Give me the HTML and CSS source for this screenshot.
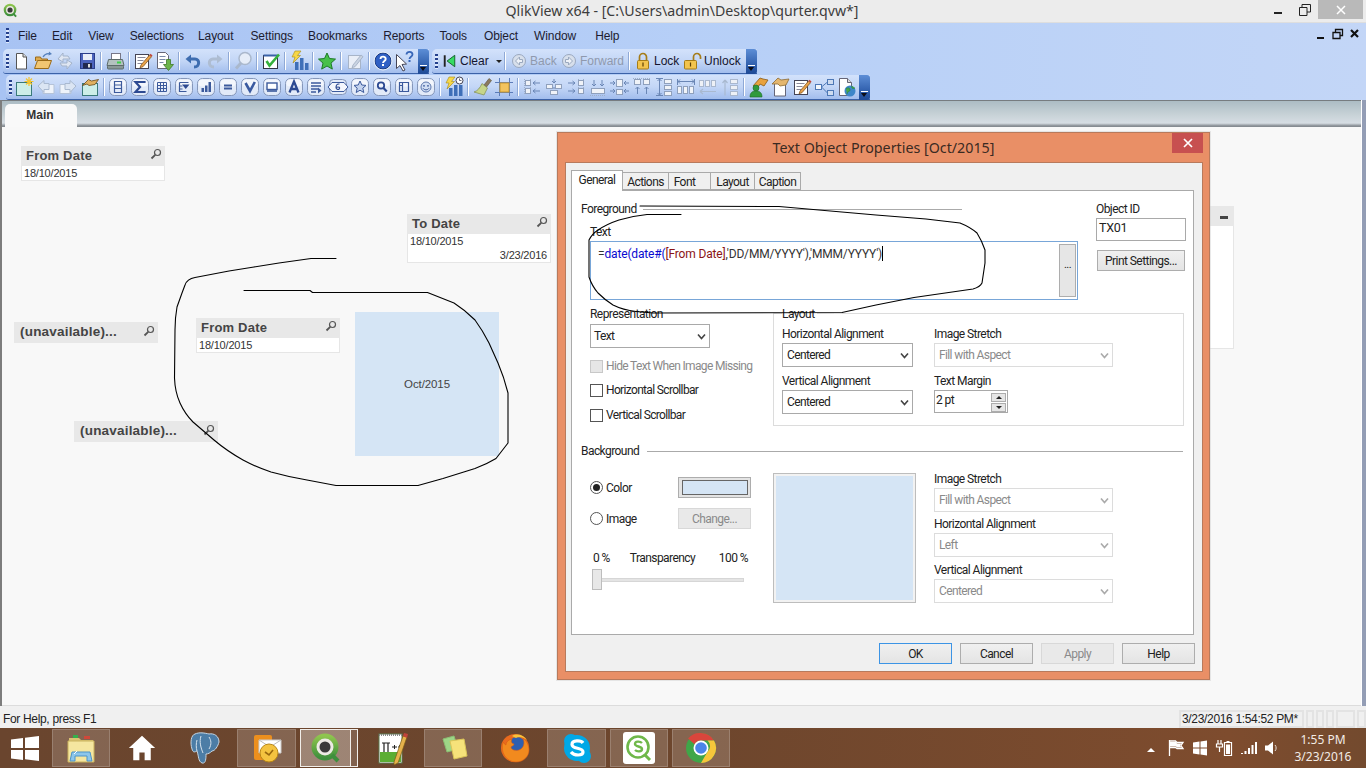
FILE: index.html
```html
<!DOCTYPE html>
<html lang="en">
<head>
<meta charset="utf-8">
<title>QlikView x64 - [C:\Users\admin\Desktop\qurter.qvw*]</title>
<link rel="stylesheet" href="styles.css">
</head>
<body>
<svg class="sprite" xmlns="http://www.w3.org/2000/svg">
<defs>
<g id="fr"><rect x="2.500" y="2.500" width="17" height="17" rx="5" fill="#e2eaf8" stroke="#8597ba"/><rect x="3.500" y="3.500" width="15" height="7" rx="3.500" fill="#f3f6fc"/></g>
<linearGradient id="qring" x1="0" y1="0" x2="0" y2="1"><stop offset="0" stop-color="#8fc54e"/><stop offset="1" stop-color="#3d8f3c"/></linearGradient>
</defs>
<symbol id="doc" viewBox="0 0 22 22"><path d="M6.500 3.500h6.500l3.500 3.500v12h-10z" fill="#fff" stroke="#555"/><path d="M13 3.500v3.500h3.500" fill="#ddd" stroke="#555"/></symbol>
<symbol id="open" viewBox="0 0 22 22"><path d="M3.500 11V7h5l1 2h6v2" fill="#dca94f" stroke="#9a6a18"/><path d="M2.500 18.500l3-8h14l-3 8z" fill="#f2c672" stroke="#9a6a18"/><path d="M11 7c2-3 4-4 7-3" fill="none" stroke="#5580bc" stroke-width="1.300"/><path d="M17 1.500l3 2.500-3.500 1.500z" fill="#5580bc"/></symbol>
<symbol id="sync" viewBox="0 0 22 22"><path d="M4 9l5-6v3h5l2 3H9v3zM18 13l-5 6v-3H8l-2-3h7v-3z" fill="#dfe6f2" stroke="#a3b3ca"/></symbol>
<symbol id="save" viewBox="0 0 22 22"><rect x="4.500" y="3.500" width="14" height="15" fill="#4c63bd" stroke="#2b3d8a"/><rect x="7" y="4" width="9" height="6" fill="#e8edf8"/><rect x="7" y="13" width="9" height="5.500" fill="#20284f"/><rect x="12" y="14" width="2" height="3.500" fill="#ddd"/></symbol>
<symbol id="print" viewBox="0 0 22 22"><rect x="7.500" y="3.500" width="9" height="6" fill="#fff" stroke="#778"/><path d="M4.500 9.500h14l1.500 6h-17z" fill="#b4c2c0" stroke="#5d6b6a"/><rect x="3.500" y="15.500" width="16" height="3.500" rx="1" fill="#8a9897" stroke="#5d6b6a"/><rect x="13" y="11.500" width="4" height="2" fill="#3fd14a"/></symbol>
<symbol id="edit" viewBox="0 0 22 22"><rect x="3.500" y="4.500" width="13" height="14" fill="#fff" stroke="#445"/><path d="M5.500 7.500h8M5.500 10.500h6M5.500 13.500h5" stroke="#889"/><path d="M9 15l8.500-10 2 1.700-8.500 10-3 1z" fill="#e8a24a" stroke="#7a4a18" stroke-width=".7"/><path d="M17.500 5l1-1.200 2 1.700-1 1.200z" fill="#c0443a"/></symbol>
<symbol id="import" viewBox="0 0 22 22"><path d="M3.500 2.500h8l3 3v13h-11z" fill="#fff" stroke="#667"/><path d="M5.500 6.500h6M5.500 9.500h6M5.500 12.500h4" stroke="#7a8aa8"/><path d="M12.500 9.500h4v5h3l-5 6-5-6h3z" fill="#6cb44a" stroke="#3f7a28" stroke-width=".8"/></symbol>
<symbol id="undo" viewBox="0 0 22 22"><path d="M8 9h5c5 0 5 8-1 8" fill="none" stroke="#3e6db0" stroke-width="3"/><path d="M3.500 9L9 4.500v9z" fill="#3e6db0"/></symbol>
<symbol id="redo" viewBox="0 0 22 22"><path d="M14 9H9c-5 0-5 8 1 8" fill="none" stroke="#aebdd2" stroke-width="3"/><path d="M18.500 9L13 4.500v9z" fill="#aebdd2"/></symbol>
<symbol id="find" viewBox="0 0 22 22"><circle cx="13" cy="8.500" r="6" fill="#e6edf8" stroke="#aab8cc" stroke-width="1.500"/><path d="M9 13l-5 5.500" stroke="#aab8cc" stroke-width="3"/></symbol>
<symbol id="check" viewBox="0 0 22 22"><rect x="3.500" y="5.500" width="14" height="13" fill="#fff" stroke="#334"/><path d="M3.500 5.500h14" stroke="#3a62a8" stroke-width="2"/><path d="M6.500 11l3 4.500 9.500-11" fill="none" stroke="#35b03c" stroke-width="2.600"/></symbol>
<symbol id="chart" viewBox="0 0 22 22"><path d="M7 1h6l-3.500 4.500h3L5 13l2-6H4z" fill="#f7d748" stroke="#a58a16" stroke-width=".6"/><rect x="7" y="12" width="3.500" height="8" fill="#3f6fb8"/><rect x="12" y="8" width="3.500" height="12" fill="#3f6fb8"/><rect x="17" y="13" width="3.500" height="7" fill="#3f6fb8"/></symbol>
<symbol id="chartc" viewBox="0 0 22 22"><path d="M6 1h6l-3.500 4.500h3L4 13l2-6H3z" fill="#f7d748" stroke="#a58a16" stroke-width=".6"/><rect x="6" y="12" width="3.500" height="8" fill="#3f6fb8"/><rect x="11" y="9" width="3.500" height="11" fill="#3f6fb8"/><rect x="16" y="9" width="3.500" height="11" fill="#3f6fb8"/><circle cx="16.500" cy="4.500" r="3.500" fill="#fff" stroke="#445"/><path d="M16.500 2.500v2h2" fill="none" stroke="#445" stroke-width=".8"/></symbol>
<symbol id="star" viewBox="0 0 22 22"><path d="M11 3l2.500 5.500 6 .6-4.500 4 1.300 6L11 16l-5.300 3.100 1.300-6-4.500-4 6-.6z" fill="#47c04a" stroke="#1d7a26"/></symbol>
<symbol id="editg" viewBox="0 0 22 22"><rect x="4.500" y="5.500" width="12" height="13" fill="#e9eef7" stroke="#a7b4c8"/><path d="M9 15l8-10 2 1.700-8 10-3 1z" fill="#c9d3e2" stroke="#9eacc2" stroke-width=".8"/></symbol>
<symbol id="help" viewBox="0 0 22 22"><circle cx="11" cy="11" r="8" fill="#2f5fc4" stroke="#1d3b80"/><circle cx="11" cy="11" r="9" fill="none" stroke="#e5ecf8"/><path d="M8.500 9c0-3.200 5.200-3.200 5.200-.1 0 2-2.700 2-2.700 4.100" fill="none" stroke="#fff" stroke-width="1.900"/><rect x="10" y="14" width="2" height="2" fill="#fff"/></symbol>
<symbol id="what" viewBox="0 0 22 22"><path d="M2.500 4.500l0 14 3.500-3 3 5.500 2-1-3-5.500 4.500-.5z" fill="#fff" stroke="#445"/><path d="M12.500 4.500c0-3.500 6-3.500 6 0 0 2.300-3 2.200-3 4.500" fill="none" stroke="#3766b8" stroke-width="1.800"/><rect x="14.500" y="10" width="2" height="2" fill="#3766b8"/></symbol>
<symbol id="clear" viewBox="0 0 22 22"><path d="M6 5v12" stroke="#222" stroke-width="2"/><path d="M16.500 5L8.500 11l8 6z" fill="#35dc62" stroke="#155f2a"/></symbol>
<symbol id="cback" viewBox="0 0 22 22"><circle cx="11" cy="11" r="6.500" fill="#d7dfeb" stroke="#9aa8bf"/><path d="M14.500 9.500h-3V7l-4 4 4 4v-2.500h3z" fill="#eef2f8" stroke="#9aa8bf"/></symbol>
<symbol id="cfwd" viewBox="0 0 22 22"><circle cx="11" cy="11" r="6.500" fill="#d7dfeb" stroke="#9aa8bf"/><path d="M7.500 9.500h3V7l4 4-4 4v-2.500h-3z" fill="#eef2f8" stroke="#9aa8bf"/></symbol>
<symbol id="lock" viewBox="0 0 22 22"><path d="M7.500 11V7a3.500 3.500 0 0 1 7 0v4" fill="none" stroke="#a57c18" stroke-width="1.700"/><rect x="5.500" y="10.500" width="11" height="8.500" rx="1" fill="#f2c44e" stroke="#a57c18"/><path d="M11 12.500v4" stroke="#5a3f06" stroke-width="1.200"/></symbol>
<symbol id="unlock" viewBox="0 0 22 22"><path d="M11.500 11V7a3.500 3.500 0 0 1 7 0v2" fill="none" stroke="#a57c18" stroke-width="1.700"/><rect x="2.500" y="10.500" width="12" height="8.500" rx="1" fill="#f2c44e" stroke="#a57c18"/><path d="M8.500 12.500v4" stroke="#5a3f06" stroke-width="1.200"/></symbol>
<symbol id="snew" viewBox="0 0 22 22"><rect x="3.500" y="6.500" width="15" height="13" fill="#cdeee8" stroke="#3a7a7a"/><path d="M16 1v9M11.500 5.500h9M13 2.500l6 6M19 2.500l-6 6" stroke="#f4c430" stroke-width="1.200"/></symbol>
<symbol id="sback" viewBox="0 0 22 22"><path d="M8 8.500h11v9h-11z" fill="#eef3fa" stroke="#b5c3d8"/><path d="M3 10l6-5.500v3h5v6H9v3z" fill="#dbe5f3" stroke="#a9b9d0"/></symbol>
<symbol id="sfwd" viewBox="0 0 22 22"><path d="M3 8.500h11v9H3z" fill="#eef3fa" stroke="#b5c3d8"/><path d="M19 10l-6-5.500v3H8v6h5v3z" fill="#dbe5f3" stroke="#a9b9d0"/></symbol>
<symbol id="sprop" viewBox="0 0 22 22"><rect x="3.500" y="7.500" width="15" height="12" fill="#cdeee8" stroke="#3a7a7a"/><path d="M3.500 9.500l6-6 3 1.500 7-1.500-3.500 5-6 1-2-1.500z" fill="#e0b060" stroke="#6a4a18" stroke-width=".8"/></symbol>
<symbol id="r-list" viewBox="0 0 22 22"><use href="#fr"/><path d="M7.500 5.500h7v11h-7zM7.500 9h7M7.500 12.500h7" fill="none" stroke="#3c5a9c" stroke-width="1.200"/></symbol>
<symbol id="r-sum" viewBox="0 0 22 22"><use href="#fr"/><path d="M15.500 7V6h-9l4.500 5-4.500 5h9v-1" fill="none" stroke="#2d4a92" stroke-width="2.200"/></symbol>
<symbol id="r-grid" viewBox="0 0 22 22"><use href="#fr"/><path d="M6.500 6.500h9v9h-9zM9.500 6.500v9M12.500 6.500v9M6.500 9.500h9M6.500 12.500h9" fill="none" stroke="#3c5a9c"/></symbol>
<symbol id="r-drop" viewBox="0 0 22 22"><use href="#fr"/><path d="M6.500 6.500h9M6.500 6.500v9h7M6.500 10h3M6.500 13h3" fill="none" stroke="#3c5a9c" stroke-width="1.200"/><path d="M9 8.500h7.500L12.700 13z" fill="#2d4a92"/></symbol>
<symbol id="r-bars" viewBox="0 0 22 22"><use href="#fr"/><rect x="6.500" y="12" width="2.500" height="4" fill="#3c5a9c"/><rect x="10" y="9.500" width="2.500" height="6.500" fill="#3c5a9c"/><rect x="13.500" y="6" width="2.500" height="10" fill="#3c5a9c"/></symbol>
<symbol id="r-eq" viewBox="0 0 22 22"><use href="#fr"/><path d="M7 9.500h8M7 12.500h8" stroke="#3c5a9c" stroke-width="1.800"/></symbol>
<symbol id="r-v" viewBox="0 0 22 22"><use href="#fr"/><path d="M6.500 7l4.500 8 4.800-9" fill="none" stroke="#3a5aa0" stroke-width="2.600"/></symbol>
<symbol id="r-win" viewBox="0 0 22 22"><use href="#fr"/><rect x="6" y="7" width="10" height="6.500" fill="#fff" stroke="#3c5a9c" stroke-width="1.400"/><path d="M6 15h10" stroke="#3c5a9c" stroke-width="1.600"/></symbol>
<symbol id="r-a" viewBox="0 0 22 22"><use href="#fr"/><path d="M6.500 16.500L11 5.500l4.500 11M8 13h6" fill="none" stroke="#2d4a92" stroke-width="2.300"/></symbol>
<symbol id="r-lines" viewBox="0 0 22 22"><use href="#fr"/><path d="M6 7h10M6 10h10M6 13h7M6 16h5" stroke="#3c5a9c" stroke-width="1.300"/><path d="M13 11.500l3.500 3-3.500 3z" fill="#3c5a9c"/></symbol>
<symbol id="r-hex" viewBox="0 0 22 22"><rect x="2.500" y="3.500" width="17" height="15" rx="4" fill="#e2eaf8" stroke="#8597ba"/><path d="M1 11l4-4.500h12l4 4.500-4 4.500H5z" fill="#f3f6fc" stroke="#3c5a9c"/><path d="M12.500 8c-3-.5-3.500 2-3.500 3.500s2 2.500 3.200 1.500-.2-3-3.200-1.500" fill="none" stroke="#2d4a92" stroke-width="1.100"/></symbol>
<symbol id="r-star" viewBox="0 0 22 22"><use href="#fr"/><path d="M11 5l1.800 4 4.200.4-3.200 2.800 1 4.300L11 14.200l-3.800 2.300 1-4.300L5 9.400 9.200 9z" fill="#c4d3ee" stroke="#3c5a9c"/></symbol>
<symbol id="r-mag" viewBox="0 0 22 22"><use href="#fr"/><circle cx="10" cy="9.500" r="3.200" fill="none" stroke="#2d4a92" stroke-width="1.800"/><path d="M12.500 12l3.300 3.500" stroke="#2d4a92" stroke-width="2.200"/></symbol>
<symbol id="r-panel" viewBox="0 0 22 22"><use href="#fr"/><path d="M6.500 6.500h9v9h-9zM6.500 9.500h3M9.500 6.500v9" fill="none" stroke="#3c5a9c" stroke-width="1.200"/></symbol>
<symbol id="r-face" viewBox="0 0 22 22"><use href="#fr"/><circle cx="11" cy="11" r="5" fill="#d1def3" stroke="#5d78ae"/><circle cx="9" cy="9.800" r=".9" fill="#3c5a9c"/><circle cx="13" cy="9.800" r=".9" fill="#3c5a9c"/><path d="M8 12.300c1.500 2 4.500 2 6 0" fill="none" stroke="#3c5a9c"/></symbol>
<symbol id="brush" viewBox="0 0 22 22"><path d="M13 9l5-6.500 2.500 2L15.500 11z" fill="#8a7a60" stroke="#5c5138" stroke-width=".6"/><path d="M11 7.500l5.500 4.500-3.500 7-10-3c3.500-1 6-4 8-8.500z" fill="#c6d58a" stroke="#7f8c50" stroke-width=".7"/></symbol>
<symbol id="sq" viewBox="0 0 22 22"><path d="M2 6.500h18M2 16.500h18M6.500 2v18M16.500 2v18" stroke="#5072b2" stroke-width=".9"/><rect x="7" y="7" width="9" height="9" fill="#f2c35e" stroke="#c8982e"/></symbol>
<symbol id="al1" viewBox="0 0 22 22"><path d="M3.500 3v16M9.500 3v16" stroke="#9fb0ca" stroke-dasharray="1 1"/><rect x="4.500" y="4.500" width="5" height="5" fill="#f0f3f8" stroke="#8fa0bc"/><rect x="4.500" y="12.500" width="5" height="5" fill="#f0f3f8" stroke="#8fa0bc"/><path d="M12 7h7M12 15h7M12 7l2.500-2M12 7l2.500 2M12 15l2.500-2M12 15l2.500 2" fill="none" stroke="#6a86b5"/></symbol>
<symbol id="al2" viewBox="0 0 22 22"><path d="M11 3v4M11 11v2" stroke="#6a86b5"/><path d="M9 5l2 2 2-2" fill="none" stroke="#6a86b5"/><rect x="3.500" y="8.500" width="6" height="4" fill="#f0f3f8" stroke="#8fa0bc"/><rect x="12.500" y="8.500" width="6" height="4" fill="#f0f3f8" stroke="#8fa0bc"/><rect x="7.500" y="14.500" width="7" height="4" fill="#f0f3f8" stroke="#8fa0bc"/></symbol>
<symbol id="al3" viewBox="0 0 22 22"><path d="M18.500 3v16M13.500 3v16" stroke="#9fb0ca" stroke-dasharray="1 1"/><rect x="13.500" y="4.500" width="5" height="5" fill="#f0f3f8" stroke="#8fa0bc"/><rect x="13.500" y="12.500" width="5" height="5" fill="#f0f3f8" stroke="#8fa0bc"/><path d="M3 7h7M3 15h7M10 7L7.500 5M10 7L7.500 9M10 15l-2.500-2M10 15l-2.500 2" fill="none" stroke="#6a86b5"/></symbol>
<symbol id="al4" viewBox="0 0 22 22"><path d="M3 19.500h16" stroke="#9fb0ca" stroke-dasharray="1 1"/><rect x="4.500" y="12.500" width="13" height="5" fill="#f0f3f8" stroke="#8fa0bc"/><path d="M7 4v6M15 4v6M7 10L5 8M7 10l2-2M15 10l-2-2M15 10l2-2" fill="none" stroke="#6a86b5"/></symbol>
<symbol id="al5" viewBox="0 0 22 22"><rect x="7.500" y="3.500" width="6" height="7" fill="#f0f3f8" stroke="#8fa0bc"/><rect x="7.500" y="13.500" width="6" height="5" fill="#f0f3f8" stroke="#8fa0bc"/><path d="M1 7h5M15 7h5M1 15h5M15 15h5M6 7L4 5M6 7L4 9M15 7l2-2M15 7l2 2M6 15l-2-2M6 15l-2 2M15 15l2-2M15 15l2 2" fill="none" stroke="#6a86b5"/></symbol>
<symbol id="al6" viewBox="0 0 22 22"><path d="M2 2.500h18" stroke="#9fb0ca" stroke-dasharray="1 1"/><rect x="3.500" y="3.500" width="6" height="5" fill="#f0f3f8" stroke="#8fa0bc"/><rect x="12.500" y="3.500" width="6" height="5" fill="#f0f3f8" stroke="#8fa0bc"/><path d="M6.500 18v-7M15.500 18v-7M6.500 11l-2 2M6.500 11l2 2M15.500 11l-2 2M15.500 11l2 2" fill="none" stroke="#6a86b5"/></symbol>
<symbol id="al7" viewBox="0 0 22 22"><path d="M3 2.500h7M3 19.500h7M6.500 3v16M6.500 3L4.500 5M6.500 3l2 2M6.500 19l-2-2M6.500 19l2-2" fill="none" stroke="#6a86b5"/><rect x="11.500" y="3.500" width="7" height="4" fill="#f0f3f8" stroke="#8fa0bc"/><rect x="11.500" y="9.500" width="7" height="4" fill="#f0f3f8" stroke="#8fa0bc"/><rect x="11.500" y="15.500" width="7" height="4" fill="#f0f3f8" stroke="#8fa0bc"/></symbol>
<symbol id="al8" viewBox="0 0 22 22"><path d="M2.500 3v6M19.500 3v6M3 5.500h16M3 5.500l2-2M3 5.500l2 2M19 5.500l-2-2M19 5.500l-2 2" fill="none" stroke="#6a86b5"/><rect x="2.500" y="10.500" width="4" height="7" fill="#f0f3f8" stroke="#8fa0bc"/><rect x="8.500" y="10.500" width="4" height="7" fill="#f0f3f8" stroke="#8fa0bc"/><rect x="14.500" y="10.500" width="4" height="7" fill="#f0f3f8" stroke="#8fa0bc"/></symbol>
<symbol id="al9" viewBox="0 0 22 22"><rect x="2.500" y="4.500" width="4" height="6" fill="#eef1f6" stroke="#aab8ce"/><rect x="8.500" y="4.500" width="4" height="6" fill="#eef1f6" stroke="#aab8ce"/><rect x="14.500" y="4.500" width="4" height="6" fill="#eef1f6" stroke="#aab8ce"/><path d="M3 15.500h16M3 15.500l3-2.500M3 15.500l3 2.500" fill="none" stroke="#a9b9d0" stroke-width="1.200"/></symbol>
<symbol id="al10" viewBox="0 0 22 22"><rect x="11.500" y="3.500" width="7" height="4" fill="#eef1f6" stroke="#aab8ce"/><rect x="11.500" y="9.500" width="7" height="4" fill="#eef1f6" stroke="#aab8ce"/><rect x="11.500" y="15.500" width="7" height="4" fill="#eef1f6" stroke="#aab8ce"/><path d="M6 19.500V4M6 4L3.500 7M6 4l2.500 3" fill="none" stroke="#a9b9d0" stroke-width="1.200"/></symbol>
<symbol id="person" viewBox="0 0 22 22"><path d="M6 10l7-8 3 1 5 1-4 6-4-2-3 5z" fill="#e8a23e" stroke="#8a5a14" stroke-width=".8"/><circle cx="9" cy="12" r="3" fill="#2f9a3c" stroke="#1c6a26" stroke-width=".6"/><path d="M3 21c0-5 3-6 6-6s6 1 6 6z" fill="#2f9a3c" stroke="#1c6a26" stroke-width=".6"/></symbol>
<symbol id="page" viewBox="0 0 22 22"><path d="M5.500 7.500l7-.5 4 0v13h-11z" fill="#fff" stroke="#667"/><path d="M3 8l6-6 3 2 8-1-3 6-6 1-2-2z" fill="#e4b66e" stroke="#8a6a34" stroke-width=".8"/></symbol>
<symbol id="nodes" viewBox="0 0 22 22"><rect x="2.500" y="8.500" width="6" height="5" fill="#f4f7fb" stroke="#4d78b6"/><rect x="14.500" y="3.500" width="6" height="5" fill="#cfdcf0" stroke="#4d78b6"/><rect x="14.500" y="14.500" width="6" height="5" fill="#cfdcf0" stroke="#4d78b6"/><path d="M8.500 11l6-5M8.500 11l6 6" stroke="#4d78b6"/></symbol>
<symbol id="globe" viewBox="0 0 22 22"><path d="M4.500 2.500h8l4 4v13h-12z" fill="#fff" stroke="#667"/><path d="M12.500 2.500v4h4" fill="#ddd" stroke="#667"/><circle cx="15" cy="15" r="5.500" fill="#3d86c9"/><path d="M11 13c2-2 4-1 4 1s-3 1-3 4M17 10c-1 2 1 3 3 2" fill="#45a548" stroke="#2f8a3b" stroke-width=".8"/></symbol>
<symbol id="t-explorer" viewBox="0 0 32 32"><path d="M4 6h10l2 2h12v8H4z" fill="#d9c372"/><rect x="8" y="3" width="5" height="3" fill="#35b04a"/><rect x="19" y="4" width="6" height="3" fill="#d0483a"/><path d="M3 9h26v21H3z" fill="#f5e6a0" stroke="#c9b15c"/><path d="M7 20h18l2 9h-5v-5H10v5H5z" fill="#8dc6ea" stroke="#4d93c8"/><path d="M9 22l3-3" stroke="#fff"/></symbol>
<symbol id="t-home" viewBox="0 0 32 32"><path d="M16 2L31 16h-5v14h-7v-9h-6v9H6V16H1z" fill="#fff"/></symbol>
<symbol id="t-pg" viewBox="0 0 32 32"><path d="M6 2c-4 1-5 9-3 15 1 4 3 3 5 2 2 6 1 10 5 12 4 1 4-5 4-9 2 0 4-1 6-3 3 0 6-5 7-9 0-6-5-9-10-8-4-1-10-2-14 0z" fill="#4c7da6" stroke="#c5d6e4"/><path d="M12 4c-2 6 0 12 2 17M20 5c2 3 3 7 0 12M8 19c-1-3-1-8 0-11" fill="none" stroke="#d6e2ec" stroke-width="1"/></symbol>
<symbol id="t-outlook" viewBox="0 0 32 32"><rect x="3" y="3" width="18" height="25" rx="2" fill="#ec8f1e"/><path d="M8 8h22v13H8z" fill="#fff" stroke="#ccc"/><path d="M8 8l11 7 11-7" fill="none" stroke="#bbb"/><circle cx="18" cy="21" r="9" fill="#f4c340" stroke="#b98716"/><path d="M14 20l4 3 4-5" fill="none" stroke="#9a6a10" stroke-width="1.600"/></symbol>
<symbol id="t-qlik" viewBox="0 0 32 32"><circle cx="15" cy="15" r="11" fill="#eceae4" stroke="url(#qring)" stroke-width="5"/><circle cx="15" cy="15" r="5.500" fill="#3a3a3a"/><path d="M22 23l6 6" stroke="#3d8f3c" stroke-width="4"/></symbol>
<symbol id="t-npp" viewBox="0 0 32 32"><rect x="3" y="2" width="23" height="29" fill="#fff" stroke="#5a7a50"/><path d="M3 3h23" stroke="#888" stroke-width="2" stroke-dasharray="1 1"/><rect x="4" y="20" width="21" height="10" fill="#5cad34"/><path d="M8 11v9M12 11v9M6 11h8" stroke="#222" stroke-width="1.200" fill="none"/><path d="M16 15h5M18.500 13v4M22 15h3M23.500 13v4" stroke="#222"/><path d="M18 30l9-26 4 1-9 26-4 2z" fill="#e6b24c" stroke="#7a5a14" stroke-width=".7"/><path d="M27 4l1-3 4 1-1 4z" fill="#c0443a"/></symbol>
<symbol id="t-sticky" viewBox="0 0 32 32"><path d="M6 7l11-3 4 13-11 3z" fill="#9ed687" stroke="#8abf73"/><path d="M13 9l14-2 3 17-13 3z" fill="#f6e27a" stroke="#d9c458"/></symbol>
<symbol id="t-ff" viewBox="0 0 32 32"><circle cx="16" cy="16" r="14" fill="#e96a1e"/><circle cx="18" cy="14" r="9" fill="#2f5fb0"/><path d="M4 10c-3 10 3 20 13 20 8 0 13-6 13-12 0-5-3-10-6-12 2 5 1 10-4 12-3 1-8 0-8-3 0-1 3-1 3-3-3-1-3-3-2-5-4 1-6 3-6 6-1 0-2-2-3-3z" fill="#f28a1e" stroke="#d95c14" stroke-width=".6"/><path d="M13 4c5-3 12-1 15 4-4-3-8-4-11-2z" fill="#f7c23a"/></symbol>
<symbol id="t-skype" viewBox="0 0 32 32"><circle cx="10" cy="9" r="7" fill="#00a8e6"/><circle cx="23" cy="24" r="7" fill="#00a8e6"/><circle cx="16" cy="16" r="13" fill="#00a8e6"/><path d="M22 11c-2-3-11-3-11 1.500 0 5 11 2.500 11 7.500 0 4-9 4-12 0" fill="none" stroke="#fff" stroke-width="3.200"/></symbol>
<symbol id="t-qs" viewBox="0 0 32 32"><rect x="0" y="0" width="32" height="32" rx="3" fill="#fff"/><circle cx="15" cy="15" r="10.500" fill="none" stroke="#6fb84a" stroke-width="2.600"/><path d="M22 23l5 5" stroke="#6fb84a" stroke-width="3"/><path d="M19 11c-2-2-7-2-7 1 0 3 7 2 7 5 0 3-5 3-7 1" fill="none" stroke="#6fb84a" stroke-width="2.400"/></symbol>
<symbol id="t-chrome" viewBox="0 0 32 32"><circle cx="16" cy="16" r="15" fill="#3fa648"/><path d="M16 1a15 15 0 0 1 13 7.500H16a7.500 7.500 0 0 0-6.500 3.800L3 6.500A15 15 0 0 1 16 1z" fill="#d9453c"/><path d="M29 8.500A15 15 0 0 1 16 31l6.500-11.200a7.500 7.500 0 0 0 0-11.300z" fill="#f6c63b"/><circle cx="16" cy="16" r="7.500" fill="#fff"/><circle cx="16" cy="16" r="5.800" fill="#4a84e8"/></symbol>
<symbol id="mag" viewBox="0 0 12 12"><circle cx="7.500" cy="4.500" r="3" fill="none" stroke="#555" stroke-width="1.200"/><path d="M5.200 6.800L1.500 10.500" stroke="#555" stroke-width="1.800"/></symbol>
<symbol id="chev" viewBox="0 0 9 9"><path d="M1 2.500l3.500 4 3.500-4" fill="none" stroke="#444" stroke-width="1.600"/></symbol>
</svg>

<div class="app">
  <header class="title">
    <div class="title-side">
      <svg class="app-ico" viewBox="0 0 32 32"><use href="#t-qlik"/></svg>
    </div>
    <div class="title-text">QlikView x64 - [C:\Users\admin\Desktop\qurter.qvw*]</div>
    <div class="title-side title-ctl">
      <div class="wbtn"><svg width="10" height="10" viewBox="0 0 10 10"><path d="M1 8h8" stroke="#222" stroke-width="2"/></svg></div>
      <div class="wbtn"><svg width="12" height="12" viewBox="0 0 12 12"><path d="M.5 3.500h7.500v8H.5zM3 3V.5h8.500V8H8" fill="none" stroke="#222"/></svg></div>
      <div class="wclose"><svg width="10" height="10" viewBox="0 0 10 10"><path d="M1 1l8 8M9 1l-8 8" stroke="#fff" stroke-width="1.500"/></svg></div>
    </div>
  </header>

  <section class="chrome">
    <nav class="menubar">
      <i class="grip"></i>
      <span class="m-file">File</span><span class="m-edit">Edit</span><span>View</span><span class="m-sel">Selections</span><span class="m-lay">Layout</span><span class="m-set">Settings</span><span>Bookmarks</span><span class="m-rep">Reports</span><span class="m-tool">Tools</span><span>Object</span><span class="m-win">Window</span><span>Help</span>
      <div class="mdi">
        <svg viewBox="0 0 17 12"><path d="M5 10h7" stroke="#111" stroke-width="2"/></svg>
        <svg viewBox="0 0 17 12"><path d="M4 4.500h7v6H4zM6.500 4V1.500h7v6H11" fill="none" stroke="#111" stroke-width="1.300"/></svg>
        <svg viewBox="0 0 17 12"><path d="M5 2l7 7M12 2L5 9" stroke="#111" stroke-width="2.200"/></svg>
      </div>
    </nav>
    <div class="tbrow">
      <div class="tb tb1">
        <i class="grip grip-tb"></i>
        <svg class="ic"><use href="#doc"/></svg><svg class="ic"><use href="#open"/></svg><svg class="ic"><use href="#sync"/></svg><svg class="ic"><use href="#save"/></svg><i class="sep"></i>
        <svg class="ic"><use href="#print"/></svg><i class="sep"></i>
        <svg class="ic"><use href="#edit"/></svg><svg class="ic"><use href="#import"/></svg><i class="sep"></i>
        <svg class="ic"><use href="#undo"/></svg><svg class="ic"><use href="#redo"/></svg><i class="sep"></i>
        <svg class="ic"><use href="#find"/></svg><i class="sep"></i>
        <svg class="ic"><use href="#check"/></svg><i class="sep"></i>
        <svg class="ic"><use href="#chart"/></svg><i class="sep"></i>
        <svg class="ic"><use href="#star"/></svg><i class="sep"></i>
        <svg class="ic"><use href="#editg"/></svg><i class="sep"></i>
        <svg class="ic"><use href="#help"/></svg><svg class="ic"><use href="#what"/></svg>
        <i class="more"></i>
      </div>
      <div class="tb tb2">
        <i class="grip grip-tb"></i>
        <div class="lbtn w-clear"><svg class="ic ic-n"><use href="#clear"/></svg><span>Clear</span><b class="caret"></b></div><i class="sep"></i>
        <div class="lbtn w-back dis"><svg class="ic"><use href="#cback"/></svg><span>Back</span></div>
        <div class="lbtn w-fwd dis"><svg class="ic"><use href="#cfwd"/></svg><span>Forward</span></div><i class="sep"></i>
        <div class="lbtn w-lock"><svg class="ic"><use href="#lock"/></svg><span>Lock</span></div>
        <div class="lbtn w-unlock"><svg class="ic"><use href="#unlock"/></svg><span>Unlock</span></div>
        <i class="more"></i>
      </div>
    </div>
    <div class="tb tb3">
      <i class="grip grip-tb"></i>
      <svg class="ic"><use href="#snew"/></svg><svg class="ic"><use href="#sback"/></svg><svg class="ic"><use href="#sfwd"/></svg><svg class="ic"><use href="#sprop"/></svg><i class="sep"></i>
      <svg class="ic"><use href="#r-list"/></svg><svg class="ic"><use href="#r-sum"/></svg><svg class="ic"><use href="#r-grid"/></svg><svg class="ic"><use href="#r-drop"/></svg><svg class="ic"><use href="#r-bars"/></svg><svg class="ic"><use href="#r-eq"/></svg><svg class="ic"><use href="#r-v"/></svg><svg class="ic"><use href="#r-win"/></svg><svg class="ic"><use href="#r-a"/></svg><svg class="ic"><use href="#r-lines"/></svg><svg class="ic"><use href="#r-hex"/></svg><svg class="ic"><use href="#r-star"/></svg><svg class="ic"><use href="#r-mag"/></svg><svg class="ic"><use href="#r-panel"/></svg><svg class="ic"><use href="#r-face"/></svg><i class="sep"></i>
      <svg class="ic"><use href="#chartc"/></svg><i class="sep"></i>
      <svg class="ic"><use href="#brush"/></svg><svg class="ic"><use href="#sq"/></svg><i class="sep"></i>
      <svg class="ic"><use href="#al1"/></svg><svg class="ic"><use href="#al2"/></svg><svg class="ic"><use href="#al3"/></svg><svg class="ic"><use href="#al4"/></svg><svg class="ic"><use href="#al5"/></svg><svg class="ic"><use href="#al6"/></svg><svg class="ic"><use href="#al7"/></svg><svg class="ic"><use href="#al8"/></svg><svg class="ic"><use href="#al9"/></svg><svg class="ic"><use href="#al10"/></svg><i class="sep"></i>
      <svg class="ic"><use href="#person"/></svg><svg class="ic"><use href="#page"/></svg><svg class="ic"><use href="#edit"/></svg><svg class="ic"><use href="#nodes"/></svg><svg class="ic"><use href="#globe"/></svg>
      <i class="more"></i>
    </div>
  </section>

  <section class="docarea">
    <div class="docmain">
      <div class="tabs"><div class="tab">Main</div></div>
      <main class="sheet">
        <article class="lb lb-a"><header class="lb-cap"><span>From Date</span><svg class="mag"><use href="#mag"/></svg></header><div class="lb-body"><div>18/10/2015</div></div></article>
        <article class="lb lb-b"><header class="lb-cap"><span>To Date</span><svg class="mag"><use href="#mag"/></svg></header><div class="lb-body"><div>18/10/2015</div><div class="lb-right">3/23/2016</div></div></article>
        <article class="lb lb-c"><header class="lb-cap"><span>From Date</span><svg class="mag"><use href="#mag"/></svg></header><div class="lb-body"><div>18/10/2015</div></div></article>
        <article class="lb lb-u lb-u1"><header class="lb-cap"><span>(unavailable)...</span><svg class="mag"><use href="#mag"/></svg></header></article>
        <article class="lb lb-u lb-u2"><header class="lb-cap"><span>(unavailable)...</span><svg class="mag"><use href="#mag"/></svg></header></article>
        <div class="txo">Oct/2015</div>
        <article class="lb lb-r"><header class="lb-cap lb-cap-r"><i class="minus"></i></header><div class="lb-body lb-fill"></div></article>
      </main>
    </div>
    <div class="docedge"></div>
  </section>

  <footer class="status">
    <div class="status-msg">For Help, press F1</div>
    <div class="panel panel-time">3/23/2016 1:54:52 PM*</div>
    <div class="panel p8"></div><div class="panel p8"></div><div class="panel p8"></div><div class="panel p20"></div><div class="panel p10"></div>
  </footer>

  <footer class="taskbar">
    <div class="tk tk-start"><svg class="win" viewBox="0 0 28 25"><path d="M0 3.500L12 2v10H0zM14 1.700L28 0v12H14zM0 14h12v10L0 22.500zM14 14h14v11l-14-1.700z" fill="#fff"/></svg></div>
    <div class="tk tk-on w58"><svg><use href="#t-explorer"/></svg></div>
    <div class="tk w60"><svg class="home"><use href="#t-home"/></svg></div>
    <div class="tk w61"><svg class="tall"><use href="#t-pg"/></svg></div>
    <div class="tk tk-on w59"><svg><use href="#t-outlook"/></svg></div>
    <div class="tk-group">
      <div class="tk tk-act w51"><svg><use href="#t-qlik"/></svg></div><div class="tk-stack"></div>
    </div>
    <div class="tk w60 gap-n"><svg class="tall"><use href="#t-npp"/></svg></div>
    <div class="tk tk-on w58"><svg><use href="#t-sticky"/></svg></div>
    <div class="tk w61"><svg><use href="#t-ff"/></svg></div>
    <div class="tk tk-on w59"><svg><use href="#t-skype"/></svg></div>
    <div class="tk tk-on w58 gap-m"><svg><use href="#t-qs"/></svg></div>
    <div class="tk tk-on w58 gap-m"><svg><use href="#t-chrome"/></svg></div>
    <div class="tray">
      <svg class="tr-chev" viewBox="0 0 10 6"><path d="M0 6l5-5 5 5z" fill="#fff"/></svg>
      <div class="tray-ics">
        <svg viewBox="0 0 20 18"><path d="M3.500 1v16M3.500 2h6l1.500 1.500h6l-2 3 2 3h-6l-1.500-1h-6" fill="none" stroke="#fff" stroke-width="1.300"/><path d="M4 3h6l1 1.500h5L14 6.500l2 2h-5l-1-1H4z" fill="#fff"/></svg>
        <svg viewBox="0 0 20 18"><path d="M3 3.500L9.500 2.500v6H3zM10.500 2.400L17 1.500v7h-6.500zM3 9.500h6.500v6L3 14.500zM10.500 9.500H17v7l-6.500-1z" fill="#fff"/></svg>
        <svg viewBox="0 0 20 18"><path d="M4 1v4M7 1v4M2.500 5h6v3h-6zM5.500 8v5M10.500 3.500h7v13h-7zM12.500 2.500h3" fill="none" stroke="#fff" stroke-width="1.200"/><rect x="12" y="5.500" width="4" height="9.500" fill="#fff"/></svg>
        <svg viewBox="0 0 20 18"><path d="M3 15h2v-1H3zM6.500 15h2v-3h-2zM10 15h2v-6h-2zM13.500 15h2V6h-2zM17 15h2V3h-2z" fill="#fff"/></svg>
        <svg viewBox="0 0 20 18"><path d="M3 6.500h3l5-4v13l-5-4H3z" fill="#fff"/><path d="M13 6c1.500 1.500 1.500 4.500 0 6" fill="none" stroke="#e8e0da"/></svg>
      </div>
      <div class="clock"><div>1:55 PM</div><div>3/23/2016</div></div>
    </div>
  </footer>

  <section class="dialog">
    <div class="dlg-title"><span class="dlg-name">Text Object Properties [Oct/2015]</span><div class="dlg-x"><svg width="10" height="10" viewBox="0 0 10 10"><path d="M1 1l8 8M9 1l-8 8" stroke="#fff" stroke-width="1.700"/></svg></div></div>
    <div class="client">
      <div class="dtabs">
        <div class="dtab dtab-on">General</div><div class="dtab w46">Actions</div><div class="dtab w42 dtab-font">Font</div><div class="dtab w44">Layout</div><div class="dtab w46">Caption</div>
      </div>
      <div class="pane">
        <div class="fg">
          <div class="fg-left">
            <div class="legend legend-fg"><span>Foreground</span><i class="rule"></i></div>
            <div class="fld-text">
              <label class="lab">Text</label>
              <div class="expr"><span class="expr-code"><span class="c-d">=</span><span class="c-b">date(date#(</span><span class="c-r">[From Date]</span><span class="c-d">,'DD/MM/YYYY'),'MMM/YYYY')</span><i class="cursor"></i></span><div class="dots">...</div></div>
            </div>
          </div>
          <div class="fg-right">
            <label class="lab">Object ID</label>
            <div class="input input-id">TX01</div>
            <div class="btn btn-print">Print Settings...</div>
          </div>
        </div>
        <div class="mid">
          <div class="mid-left">
            <label class="lab">Representation</label>
            <div class="sel sel-rep"><span>Text</span><svg class="chev"><use href="#chev"/></svg></div>
            <div class="chk chk-1 chk-dis"><i class="box box-dis"></i><span>Hide Text When Image Missing</span></div>
            <div class="chk chk-2"><i class="box"></i><span>Horizontal Scrollbar</span></div>
            <div class="chk chk-3"><i class="box"></i><span>Vertical Scrollbar</span></div>
          </div>
          <div class="grp">
            <span class="grp-leg">Layout</span>
            <div class="grp-grid">
              <div><label class="lab">Horizontal Alignment</label><div class="sel sel-m"><span>Centered</span><svg class="chev"><use href="#chev"/></svg></div></div>
              <div><label class="lab">Image Stretch</label><div class="sel sel-w sel-dis"><span>Fill with Aspect</span><svg class="chev"><use href="#chev"/></svg></div></div>
              <div><label class="lab">Vertical Alignment</label><div class="sel sel-m"><span>Centered</span><svg class="chev"><use href="#chev"/></svg></div></div>
              <div><label class="lab">Text Margin</label>
                <div class="spin"><span>2 pt</span><div class="spin-btns"><b class="up"></b><b class="down"></b></div></div>
              </div>
            </div>
          </div>
        </div>
        <div class="legend legend-bg"><span>Background</span><i class="rule"></i></div>
        <div class="bgrow">
          <div class="bg-left">
            <div class="radio-row"><i class="radio radio-on"></i><span class="rlab">Color</span><div class="colorbtn"><i></i></div></div>
            <div class="radio-row rr2"><i class="radio"></i><span class="rlab">Image</span><div class="btn btn-dis btn-change">Change...</div></div>
            <div class="trans"><span>0 %</span><span>Transparency</span><span>100 %</span></div>
            <div class="slider"><i class="thumb"></i><i class="track"></i></div>
          </div>
          <div class="preview"><i></i></div>
          <div class="bg-right">
            <label class="lab">Image Stretch</label><div class="sel sel-w sel-dis"><span>Fill with Aspect</span><svg class="chev"><use href="#chev"/></svg></div>
            <label class="lab lab-sp">Horizontal Alignment</label><div class="sel sel-w sel-dis"><span>Left</span><svg class="chev"><use href="#chev"/></svg></div>
            <label class="lab lab-sp2">Vertical Alignment</label><div class="sel sel-w sel-dis"><span>Centered</span><svg class="chev"><use href="#chev"/></svg></div>
          </div>
        </div>
      </div>
      <div class="dlg-btns">
        <div class="btn btn-a btn-def">OK</div><div class="btn btn-a">Cancel</div><div class="btn btn-a btn-dis">Apply</div><div class="btn btn-a">Help</div>
      </div>
    </div>
  </section>

  <svg class="ink" viewBox="0 0 1366 768" xmlns="http://www.w3.org/2000/svg">
    <path d="M336 258.500H311L279 263 254 267 229 271 195 277.500Q187 279 185 285L182 293 177 307Q175 318 175 330L174.500 378Q175 392 180 403Q185 414 193 422L214 440Q227 451 243 460Q256 467 271 472Q289 477 307 480L336 485.500H418L443 478.500 475 468.500Q487 464 496 458.500L508 443V393Q504 377 498 363L489 343Q483 331 475 320Q465 310 454 303L427.500 292.500H312.500L310 290.500H244"/>
    <path d="M681 214.500H647Q632 216 619 220Q607 224 598 230Q592 234 589 240V277Q592 286 598 293Q605 300 613 305Q623 310 636 311.500L653 313 842 312.500 876 305 914 297.500 973 289Q980 287 982 283L985 263V250Q982 241 977 233Q970 227 960 223L926 219 876 215 779 206.500 640 206"/>
  </svg>
</div>
</body>
</html>
```

FILE: styles.css
```css
* { box-sizing: border-box; }
html, body { margin: 0; padding: 0; }
body { width: 1366px; height: 768px; overflow: hidden; background: #f7f7f7; font-family: "Liberation Sans", Arial, sans-serif; color: #222; }
i, b { font-style: normal; display: block; }
.sprite { position: absolute; width: 0; height: 0; overflow: hidden; }
.app { position: relative; width: 1366px; height: 768px; display: flex; flex-direction: column; overflow: hidden; }

/* title bar */
.title { height: 23px; flex: none; display: flex; align-items: flex-start; background: #ececec; border-bottom: 1px solid #dedede; }
.title-side { flex: 1; display: flex; padding: 3px 0 0 3px; }
.app-ico { width: 15px; height: 15px; }
.title-text { font-family: "Noto Sans", sans-serif; font-size: 14.160px; line-height: 22px; color: #3c3c3c; white-space: nowrap; margin-right: 2px; }
.title-ctl { justify-content: flex-end; padding: 0 3px 0 0; }
.wbtn { width: 27px; height: 19px; display: flex; align-items: center; justify-content: center; }
.wclose { width: 45px; height: 19px; background: #b9b9b9; display: flex; align-items: center; justify-content: center; }

/* blue chrome */
.chrome { height: 77px; flex: none; background: linear-gradient(90deg, #a8c3f3, #b6cff7 50%, #c3d6f7); display: flex; flex-direction: column; }
.menubar { height: 25px; display: flex; align-items: center; gap: 16px; font-size: 12px; letter-spacing: -.1px; color: #1c1c30; padding-left: 6px; }
.menubar .grip { margin-right: -7px; width: 3px; }
.m-edit { margin-left: -1px; }
.m-sel { margin-right: -2px; }
.m-lay { margin-right: 1px; }
.m-set { margin-right: -1px; }
.m-rep { margin-right: -1px; }
.m-tool { margin-right: 1px; }
.m-win { margin-right: 3px; }
.grip { width: 3px; height: 15px; background: repeating-linear-gradient(180deg, #24408c 0 2px, #dfe9fb 2px 4px); }
.mdi { margin-left: auto; display: flex; padding-right: 3px; }
.mdi svg { width: 17px; height: 12px; margin-bottom: 3px; }
.tbrow { display: flex; height: 25px; padding-left: 3px; margin-top: 1px; }
.tb { display: flex; align-items: center; height: 25px; background: linear-gradient(180deg, #d3e2fb, #c3d6f6 50%, #a2bded); border-bottom: 1px solid #3b62a8; border-radius: 5px 0 0 3px; font-size: 12px; color: #14142e; }
.tb1 { width: 426px; }
.tb2 { width: 325px; margin-left: 3px; }
.tb3 { width: 864px; margin: 1px 0 0 6px; }
.grip-tb { width: 3px; height: 15px; margin: 0 1.500px 0 2.500px; flex: none; }
.ic { width: 22px; height: 22px; flex: none; }
.ic-n { width: 21px; }
.sep { width: 2px; height: 18px; margin: 0 2px; flex: none; background: linear-gradient(90deg, #8fa9d6 50%, #fff 50%); }
.more { margin-left: auto; width: 11px; height: 25px; flex: none; background: linear-gradient(180deg, #5d8ed6, #2c5ba9 70%, #1f4a96); position: relative; border-radius: 0 3px 3px 0; margin-bottom: -1px; }
.more::after { content: ""; position: absolute; left: 2px; bottom: 3px; width: 0; height: 0; border: 3.500px solid transparent; border-top: 4px solid #0c0c14; border-bottom: 0; }
.more::before { content: ""; position: absolute; left: 2px; bottom: 8px; width: 7px; height: 1px; background: #fff; }
.lbtn { display: flex; align-items: center; flex: none; height: 22px; white-space: nowrap; }
.dis { color: #8f99ad; }
.w-clear { width: 63px; }
.caret { width: 0; height: 0; border: 3px solid transparent; border-top: 3px solid #222; border-bottom: 0; margin-left: 7px; }
.w-back { width: 50px; }
.w-fwd { width: 68px; }
.w-lock { width: 50px; }
.w-unlock { width: 63px; }

/* document */
.docarea { height: 606px; flex: none; display: flex; }
.docmain { flex: 1; display: flex; flex-direction: column; border-left: 2px solid #7d7d7d; min-width: 0; }
.docedge { width: 5px; background: #939db5; border-left: 1px solid #fff; }
.tabs { height: 27px; flex: none; background: linear-gradient(180deg, #acbcc4, #c6d1d6 50%, #d6dde3 85%, #868c92 96%); border-top: 1px solid #777c80; padding: 3px 0 0 3px; display: flex; }
.tab { width: 72px; height: 23px; background: #f9f9f9; border-radius: 5px 5px 0 0; font-weight: 700; font-size: 12px; line-height: 22px; color: #333; text-align: center; padding-right: 2px; }
.sheet { flex: 1; position: relative; background: #f8f8f8; border-bottom: 1px solid #dcdcdc; }
.lb { position: absolute; width: 144px; background: #fff; }
.lb-cap { height: 20px; background: #e8e8e8; display: flex; align-items: center; justify-content: space-between; padding: 0 3px 2px 5px; font-weight: 700; font-size: 13px; letter-spacing: .2px; color: #444; }
.mag { width: 12px; height: 12px; margin-bottom: 2px; }
.lb-body { border: 1px solid #e6e6e6; border-top: 0; padding: 0 0 0 2px; font-size: 11px; letter-spacing: -.2px; line-height: 14px; color: #333; }
.lb-right { text-align: right; padding-right: 3px; }
.lb-a { left: 19px; top: 19px; }
.lb-b { left: 405px; top: 87px; }
.lb-c { left: 194px; top: 191px; }
.lb-u { background: none; }
.lb-u .lb-cap { height: 21px; font-size: 13.500px; padding-left: 6px; }
.lb-u1 { left: 12px; top: 195px; }
.lb-u2 { left: 72px; top: 294px; }
.lb-b .lb-body { height: 29px; }
.txo { position: absolute; left: 353px; top: 185px; width: 144px; height: 144px; background: #d5e5f5; display: flex; align-items: center; justify-content: center; font-size: 11.500px; letter-spacing: -.1px; color: #444; }
.lb-r { left: 1088px; top: 79px; height: 143px; display: flex; flex-direction: column; }
.lb-cap-r { justify-content: flex-end; padding: 0 6px 0 0; }
.minus { width: 8px; height: 3px; background: #444; margin-top: 3px; }
.lb-fill { flex: 1; }

/* status */
.status { height: 22px; flex: none; background: #f0f0f0; display: flex; align-items: flex-end; font-size: 12px; letter-spacing: -.33px; color: #222; }
.status-msg { flex: 1; padding-left: 3px; line-height: 18px; }
.panel { height: 18px; border: 2px solid #e3e3e3; flex: none; margin-left: 2px; }
.panel-time { width: 125px; line-height: 14px; padding-left: 1px; white-space: nowrap; }
.p8 { width: 8px; }
.p20 { width: 19px; }
.p10 { width: 9px; }

/* taskbar */
.taskbar { flex: 1; display: flex; align-items: center; gap: 2px; background: linear-gradient(90deg, #6a452e, #6d462d 50%, #7e4c2e 90%, #734a2e); }
.tk { height: 38px; display: flex; align-items: center; justify-content: center; flex: none; }
.tk svg { width: 32px; height: 32px; }
.tk-start { width: 50px; }
.tk .win { width: 28px; height: 25px; }
.tk .home { width: 30px; height: 28px; }
.tk .tall { height: 34px; }
.tk-on { background: rgba(255, 255, 255, .17); border: 1px solid rgba(255, 255, 255, .18); }
.w51 { width: 51px; }
.w58 { width: 58px; }
.w59 { width: 59px; }
.w60 { width: 60px; }
.w61 { width: 61px; }
.tk-group { display: flex; margin-left: 2px; }
.tk-act { background: rgba(255, 255, 255, .34); border: 1px solid #f1eeea; }
.tk-stack { width: 7px; height: 38px; border: 1px solid #f1eeea; border-left: 0; background: rgba(255, 255, 255, .15); }
.gap-n { margin-left: 2px; }
.gap-m { margin-left: 2px; }
.tray { margin-left: auto; display: flex; align-items: center; }
.tr-chev { width: 8px; height: 5px; margin: 3px 11px 0 0; }
.tray-ics { display: flex; gap: 4px; margin-right: 4px; }
.tray-ics svg { width: 20px; height: 18px; }
.clock { width: 74px; margin-right: 6px; text-align: center; font-family: "Noto Sans", sans-serif; font-size: 12px; line-height: 17px; color: #f3ece6; }

/* dialog */
.dialog { position: absolute; left: 557px; top: 132px; width: 653px; height: 548px; background: #e98f66; border: 1px solid #b87a5c; display: flex; flex-direction: column; box-shadow: 0 0 0 1px rgba(200, 200, 200, .4); }
.dlg-title { height: 29px; flex: none; position: relative; display: flex; justify-content: center; padding-top: 5px; }
.dlg-name { font-family: "Noto Sans", sans-serif; font-size: 14.270px; line-height: 20px; color: #3a2a22; white-space: nowrap; }
.dlg-x { position: absolute; right: 6px; top: 0; width: 31px; height: 20px; background: #c75050; display: flex; align-items: center; justify-content: center; }
.client { flex: 1; margin: 0 6px 7px 7px; background: #f0f0f0; border: 1px solid #b87a5c; padding: 7px 8px 0 5px; display: flex; flex-direction: column; font-family: Roboto, sans-serif; font-size: 12px; letter-spacing: -.56px; color: #222; }
.dtabs { display: flex; height: 21px; align-items: flex-end; flex: none; position: relative; z-index: 1; }
.dtab { height: 18px; margin-bottom: 1px; background: #f0f0f0; border: 1px solid #aaa; border-left: 0; text-align: center; line-height: 18px; }
.dtab-on { width: 52px; height: 21px; margin-bottom: 0; background: #fff; border-left: 1px solid #aaa; border-bottom: 0; line-height: 19px; }
.dtab-font { padding-right: 10px; }
.w46 { width: 46px; }
.w42 { width: 42px; }
.w44 { width: 44px; }
.pane { width: 623px; height: 445px; margin-top: -1px; flex: none; background: #fff; border: 1px solid #aaa; display: flex; flex-direction: column; padding: 11px 0 0 9px; }
.lab { display: block; height: 14px; line-height: 14px; white-space: nowrap; }
.legend { display: flex; align-items: center; height: 14px; line-height: 14px; }
.rule { height: 1px; background: #aaa; flex: 1; }
.legend-fg .rule { margin-left: 6px; }
.legend-fg { width: 381px; }
.fg { display: flex; height: 98px; flex: none; }
.fg-left { width: 515px; }
.fld-text { padding: 9px 0 0 9px; }
.expr { width: 488px; height: 59px; margin-top: 2px; border: 1px solid #78a6d8; display: flex; justify-content: space-between; padding: 2px 1px 2px 7px; }
.expr-code { display: flex; height: 16px; line-height: 16px; margin-top: 2px; white-space: pre; font-size: 12px; letter-spacing: -.16px; }
.c-d { color: #333; }
.c-b { color: #0a0ad0; }
.c-r { color: #8a1414; }
.cursor { width: 1px; height: 15px; background: #000; }
.dots { width: 17px; height: 53px; background: #e6e6e6; border: 1px solid #adadad; text-align: center; line-height: 40px; font-size: 11px; }
.fg-right { width: 90px; }
.input { background: #fff; border: 1px solid #a9a9a9; }
.input-id { width: 90px; height: 23px; margin-top: 2px; padding-left: 2px; font-size: 12.500px; letter-spacing: -.25px; line-height: 18px; }
.btn { background: linear-gradient(180deg, #f0f0f0, #e4e4e4); border: 1px solid #adadad; display: flex; align-items: center; justify-content: center; white-space: nowrap; }
.btn-print { width: 88px; height: 21px; margin: 9px 0 0 1px; }
.mid { display: flex; margin: 7px 0 0 9px; height: 119px; flex: none; }
.mid-left { width: 183px; }
.sel { display: flex; align-items: center; justify-content: space-between; height: 24px; margin-top: 2px; background: #fff; border: 1px solid #a9a9a9; padding: 0 3px 0 4px; letter-spacing: -.62px; }
.sel-rep { width: 120px; margin-top: 3px; padding-left: 3px; }
.sel-m { width: 131px; }
.sel-w { width: 179px; }
.sel-dis { border-color: #dcdcdc; color: #8a8a8a; }
.chev { width: 9px; height: 9px; }
.sel-dis .chev { opacity: .45; }
.chk { display: flex; align-items: center; gap: 3px; height: 14px; letter-spacing: -.66px; }
.chk-1 { margin-top: 11px; }
.chk-2 { margin-top: 10px; }
.chk-3 { margin-top: 11px; }
.chk-dis { color: #8a8a8a; }
.box { width: 13px; height: 13px; background: #fff; border: 1px solid #555; flex: none; }
.box-dis { background: #e6e6e6; border-color: #c8c8c8; }
.grp { position: relative; width: 411px; height: 113px; margin-top: 6px; border: 1px solid #dcdcdc; padding: 13px 0 0 8px; }
.grp-leg { position: absolute; left: 8px; top: -7px; line-height: 14px; background: #fff; padding-right: 2px; }
.grp-grid { display: grid; grid-template-columns: 152px 1fr; row-gap: 7px; }
.spin { display: flex; justify-content: space-between; width: 74px; height: 23px; margin-top: 2px; border: 1px solid #a9a9a9; padding: 1px 1px 0 1px; line-height: 16px; }
.spin-btns { width: 15px; display: flex; flex-direction: column; gap: 1px; padding-top: 1px; }
.spin-btns b { height: 9px; background: #e6e6e6; border: 1px solid #adadad; position: relative; }
.spin-btns b::after { content: ""; position: absolute; left: 3.500px; top: 2px; border: 3px solid transparent; }
.spin-btns .up::after { border-bottom: 3px solid #222; border-top: 0; }
.spin-btns .down::after { border-top: 3px solid #222; border-bottom: 0; }
.legend-bg { margin-top: 18px; width: 602px; flex: none; }
.legend-bg .rule { margin-left: 8px; }
.bgrow { display: flex; margin: 15px 0 0 9px; height: 130px; flex: none; }
.bg-left { width: 183px; padding-top: 4px; }
.radio-row { display: flex; align-items: center; height: 21px; width: 161px; }
.rr2 { margin-top: 10px; }
.radio { width: 13px; height: 13px; border-radius: 50%; background: #fff; border: 1px solid #555; flex: none; position: relative; }
.radio-on::after { content: ""; position: absolute; left: 2px; top: 2px; width: 7px; height: 7px; border-radius: 50%; background: #222; }
.rlab { margin-left: 3px; flex: 1; }
.colorbtn { width: 73px; height: 21px; background: #e4e4e4; border: 1px solid #adadad; padding: 2px 2px 2px 3px; }
.colorbtn i { height: 15px; background: #d5e5f5; border: 1px solid #666; }
.btn-change { width: 73px; height: 21px; }
.btn-dis { background: #e9e9e9; border-color: #d8d8d8; color: #8a8a8a; }
.trans { display: flex; margin-top: 22px; height: 14px; line-height: 14px; padding-left: 3px; width: 158px; }
.trans span:nth-child(2) { margin-left: 20px; }
.trans span:nth-child(3) { margin-left: auto; }
.slider { display: flex; align-items: center; height: 21px; margin: 4px 0 0 2px; width: 152px; }
.thumb { width: 10px; height: 21px; background: #e8e8e8; border: 1px solid #bdbdbd; flex: none; }
.track { flex: 1; height: 4px; background: #e4e4e4; border: 1px solid #d6d6d6; border-left: 0; }
.preview { width: 143px; height: 130px; border: 1px solid #bdbdbd; padding: 2px; background: #f2f2f2; margin-right: 18px; flex: none; }
.preview i { height: 100%; background: #d5e5f5; }
.bg-right { margin-top: -1px; }
.lab-sp { margin-top: 5px; }
.lab-sp2 { margin-top: 6px; }
.dlg-btns { display: flex; justify-content: flex-end; gap: 8px; margin: 8px -1px 0 0; width: 624px; }
.btn-a { width: 73px; height: 21px; }
.btn-def { border-color: #3c94e5; }

/* hand-drawn marks over the screen */
.ink { position: absolute; left: 0; top: 0; width: 1366px; height: 768px; pointer-events: none; }
.ink path { fill: none; stroke: #000; stroke-width: 1.100; stroke-linejoin: round; stroke-linecap: round; }
```
